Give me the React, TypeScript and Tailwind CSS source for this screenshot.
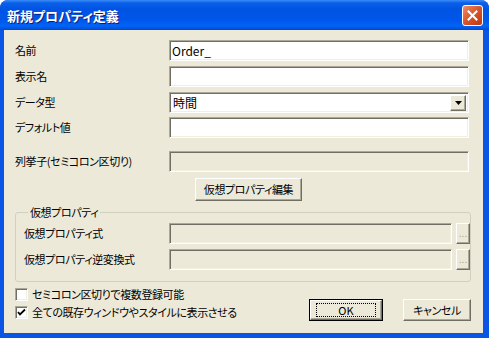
import clsx from "clsx";

const font = "font-['Noto_Sans_CJK_JP','Noto_Sans',sans-serif] [font-feature-settings:'palt']";
const txt = "text-[11px] leading-none tracking-[-0.4px]";

// sunken 3D edit box, XP classic look
function Field({ value, disabled, className }: { value?: string; disabled?: boolean; className?: string }) {
  return (
    <div
      className={clsx(
        "h-[21px] border border-t-[#ACA899] border-l-[#ACA899] border-r-white border-b-white shadow-[inset_1px_1px_0_#716F64,inset_-1px_-1px_0_#F1EFE2] flex items-center pl-[2px] text-[12px] leading-none",
        disabled ? "bg-[#ECE9D8]" : "bg-white",
        className,
      )}
    >
      {value}
    </div>
  );
}

function Raised({ children, className }: { children?: React.ReactNode; className?: string }) {
  return (
    <div
      className={clsx(
        "bg-[#ECE9D8] border border-t-white border-l-white border-r-[#716F64] border-b-[#716F64] shadow-[inset_-1px_-1px_0_#ACA899] flex items-center justify-center",
        className,
      )}
    >
      {children}
    </div>
  );
}

function Row({ label, children, labelWidth = "w-[154px]" }: { label: string; children: React.ReactNode; labelWidth?: string }) {
  return (
    <div className="flex items-center h-[21px]">
      <div className={clsx(labelWidth, "shrink-0", txt)}>{label}</div>
      <div className="flex-1 flex">{children}</div>
    </div>
  );
}

function Check({ checked, label }: { checked?: boolean; label: string }) {
  return (
    <div className="flex items-center h-[13px] gap-[4px]">
      <div className="w-[13px] h-[13px] bg-white border border-t-[#ACA899] border-l-[#ACA899] border-r-white border-b-white shadow-[inset_1px_1px_0_#716F64,inset_-1px_-1px_0_#F1EFE2] flex items-center justify-center">
        {checked && (
          <svg width="9" height="9" viewBox="0 0 9 9">
            <path d="M1 4 L3 6.5 L8 1.5" stroke="#000" strokeWidth="1.8" fill="none" />
          </svg>
        )}
      </div>
      <span className={txt}>{label}</span>
    </div>
  );
}

export default function App() {
  return (
    <div className={clsx(font, "w-[489px] h-[338px] flex flex-col bg-[#0A55E3] rounded-t-[8px] overflow-hidden text-black")}>
      <div className="h-[30px] shrink-0 flex items-center justify-between pl-[7px] pr-[6px] bg-[linear-gradient(to_bottom,#3A8CF6_0px,#0A5FEA_3px,#0054E3_9px,#0056EA_20px,#0064F8_26px,#0049CC_30px)]">
        <span className="text-white font-bold text-[13px] leading-none [text-shadow:1px_1px_0_#0A1E80]">新規プロパティ定義</span>
        <div className="w-[21px] h-[21px] rounded-[3px] border border-white bg-[linear-gradient(135deg,#F08C6A,#D8532A_50%,#B93A14)] flex items-center justify-center">
          <svg width="11" height="11" viewBox="0 0 11 11">
            <path d="M1.5 1.5 L9.5 9.5 M9.5 1.5 L1.5 9.5" stroke="#fff" strokeWidth="2" strokeLinecap="square" />
          </svg>
        </div>
      </div>

      <div className="flex-1 ml-[4px] mr-[6px] mb-[5px] bg-[#ECE9D8] pl-[11px] pr-[14px] pt-[10px] flex flex-col">
        <Row label="名前">
          <Field value="Order_" className="flex-1" />
        </Row>
        <div className="mt-[5px]">
          <Row label="表示名">
            <Field className="flex-1" />
          </Row>
        </div>
        <div className="mt-[5px]">
          <Row label="データ型">
            <div className="flex-1 h-[21px] bg-white border border-t-[#ACA899] border-l-[#ACA899] border-r-white border-b-white shadow-[inset_1px_1px_0_#716F64,inset_-1px_-1px_0_#F1EFE2] flex items-center justify-between pl-[3px] pr-[2px]">
              <span className="text-[12px] leading-none">時間</span>
              <Raised className="w-[16px] h-[16px]">
                <svg width="7" height="4" viewBox="0 0 7 4">
                  <path d="M0 0 H7 L3.5 4 Z" fill="#000" />
                </svg>
              </Raised>
            </div>
          </Row>
        </div>
        <div className="mt-[4px]">
          <Row label="デフォルト値">
            <Field className="flex-1" />
          </Row>
        </div>
        <div className="mt-[13px]">
          <Row label="列挙子(セミコロン区切り)">
            <Field disabled className="flex-1" />
          </Row>
        </div>

        <Raised className={clsx("mt-[6px] ml-[180px] w-[107px] h-[23px]", txt)}>仮想プロパティ編集</Raised>

        <fieldset className="mt-[4px] -mr-[2px] border border-[#D0D0BF] rounded-[3px] pl-[8px] pb-[11px] pr-0">
          <legend className={clsx("ml-[4px] px-[2px] leading-[14px]", "text-[11px] tracking-[-0.4px]")}>仮想プロパティ</legend>
          <div className="pt-[4px]">
            <Row label="仮想プロパティ式" labelWidth="w-[145px]">
              <Field disabled className="flex-1" />
              <Raised className="ml-[4px] w-[14px] h-[21px] text-[10px] leading-none text-[#ACA899] items-end pb-[5px]">...</Raised>
            </Row>
          </div>
          <div className="mt-[5px]">
            <Row label="仮想プロパティ逆変換式" labelWidth="w-[145px]">
              <Field disabled className="flex-1" />
              <Raised className="ml-[4px] w-[14px] h-[21px] text-[10px] leading-none text-[#ACA899] items-end pb-[5px]">...</Raised>
            </Row>
          </div>
        </fieldset>

        <div className="mt-[6px] -mr-[2px] flex justify-between items-start">
          <div className="flex flex-col gap-[5px]">
            <Check label="セミコロン区切りで複数登録可能" />
            <Check checked label="全ての既存ウィンドウやスタイルに表示させる" />
          </div>
          <div className="mt-[11px] flex gap-[20px]">
            <div className="w-[74px] h-[22px] border border-black">
              <Raised className="w-full h-full">
                <div className="w-[60px] h-[14px] border border-dotted border-black flex items-center justify-center text-[11px] leading-none">OK</div>
              </Raised>
            </div>
            <Raised className={clsx("w-[68px] h-[22px]", txt)}>キャンセル</Raised>
          </div>
        </div>
      </div>
    </div>
  );
}
